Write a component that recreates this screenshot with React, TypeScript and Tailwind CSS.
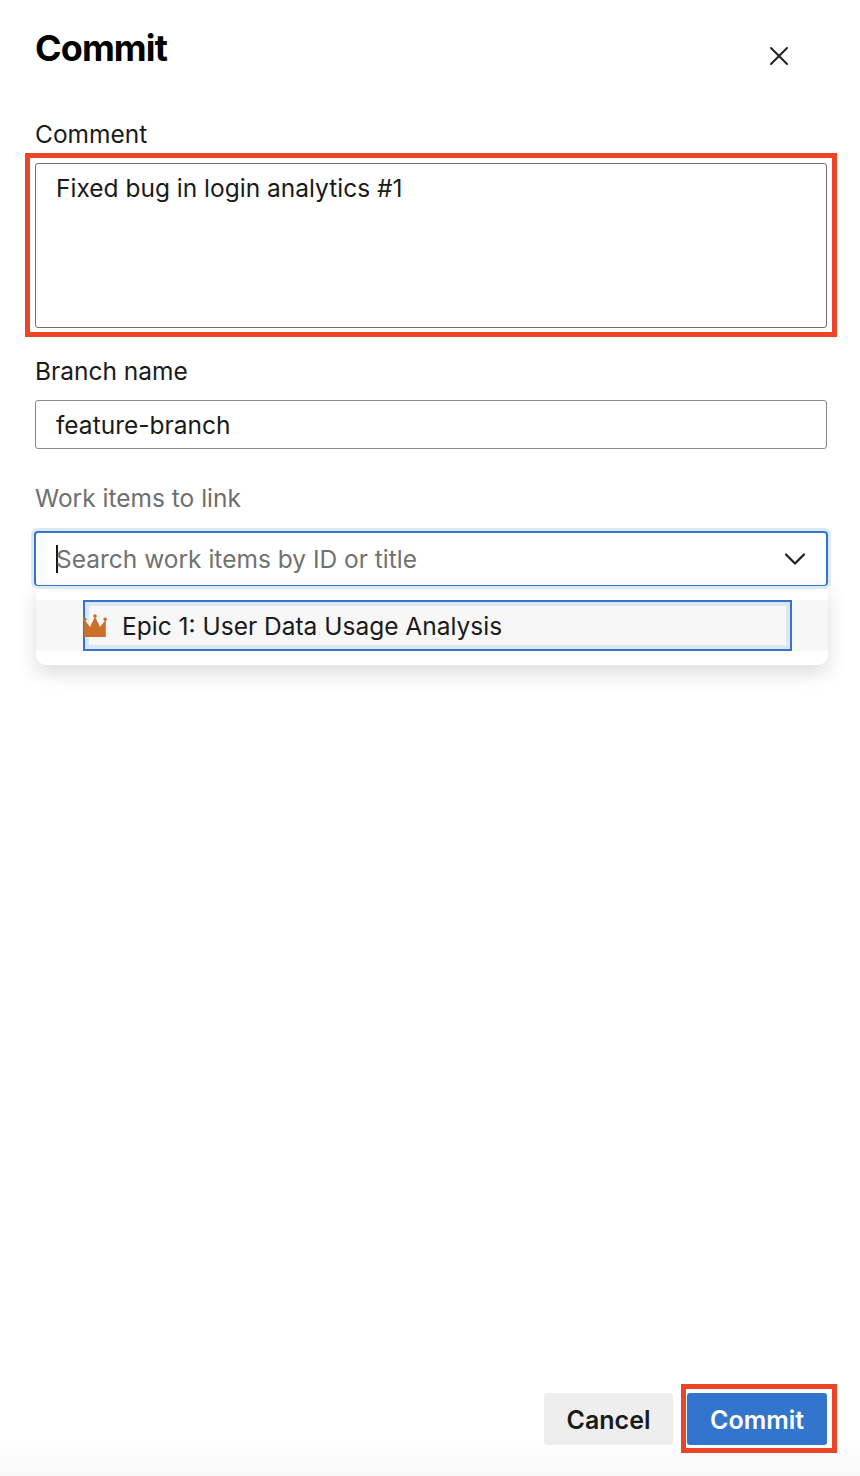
import { X, ChevronDown } from "lucide-react";

const FONT = "font-['Inter','Liberation_Sans',sans-serif]";

function CrownIcon() {
  return (
    <svg width="24" height="24" viewBox="0 0 24 24" className="shrink-0">
      <circle cx="1.8" cy="5.2" r="1.8" fill="#cc7029" />
      <circle cx="12" cy="2" r="1.8" fill="#cc7029" />
      <circle cx="22.2" cy="5.2" r="1.8" fill="#cc7029" />
      <path d="M1.2 5.5 L7 13 L12 2.5 L17 13 L22.8 5.5 L22.8 23 L1.2 23 Z" fill="#cc7029" />
    </svg>
  );
}

export default function App() {
  return (
    <div
      className={`${FONT} flex h-[1476px] w-[860px] flex-col bg-gradient-to-b from-white from-[97.5%] to-[#f8f8f8] pr-[33px] pl-[35px] text-[24.5px] text-[#1a1a1a]`}
    >
      <div className="flex items-start justify-between pt-[25px]">
        <h1 className="text-[36px] leading-[46px] font-bold tracking-[-0.9px] text-black">Commit</h1>
        <button className="mt-[15px] mr-[32px] text-[#222]">
          <X className="h-[32px] w-[32px]" strokeWidth={1.5} />
        </button>
      </div>

      <label className="mt-[47px] leading-[30px]">Comment</label>
      <div className="-mx-[10px] mt-[4px] border-[5px] border-[#ee4426] px-[5px] pt-[5px] pb-[4px]">
        <div className="h-[165px] rounded-[3px] border border-[#6f6f6f] px-[20px] py-[8px] leading-[32px]">
          Fixed bug in login analytics #1
        </div>
      </div>

      <label className="mt-[19px] leading-[30px]">Branch name</label>
      <div className="mt-[14px] h-[49px] rounded-[3px] border border-[#8a8a8a] px-[20px] leading-[49px]">
        feature-branch
      </div>

      <label className="mt-[34px] leading-[30px] text-[#6e6e6e]">Work items to link</label>

      <div className="relative mt-[18px] flex flex-col">
        <div className="relative z-10 -mx-px flex h-[55px] items-center justify-between rounded-[4px] border-2 border-b border-[#3374cc] pr-[13px] pl-[20px] ring-[3px] ring-[#dde8f7]">
          <span className="border-l-2 border-[#1a1a1a] leading-[28px] text-[#717171]">
            <span className="-ml-[2px]">Search work items by ID or title</span>
          </span>
          <ChevronDown className="h-[36px] w-[36px] text-[#222]" strokeWidth={1.5} />
        </div>
        <div className="-mr-px ml-px flex h-[79px] flex-col rounded-b-[10px] bg-white pt-[14px] shadow-[0_8px_20px_rgba(0,0,0,0.14)]">
          <div className="h-[51px] bg-[#f7f7f7] pl-[47px]">
            <div className="flex h-full w-[709px] items-center gap-[15px] border-2 border-[#3374cc] ring-[4px] ring-[#dfe6f3] ring-inset">
              <span className="-ml-[2px] flex">
                <CrownIcon />
              </span>
              <span className="mt-[1px]">Epic 1: User Data Usage Analysis</span>
            </div>
          </div>
        </div>
      </div>

      <div className="mt-auto mb-[23px] flex items-end justify-end gap-[8px]">
        <button className="mb-[8px] h-[52px] w-[129px] rounded-[3px] bg-[#eeeeee] pt-[3px] text-[25px] font-semibold">
          Cancel
        </button>
        <div className="-mr-[10px] border-[5px] border-[#ee4426] pt-[4px] pr-[5px] pb-[3px] pl-[1px]">
          <button className="block h-[52px] w-[140px] rounded-[3px] bg-[#3374cc] pt-[3px] text-[25px] font-semibold text-white">
            Commit
          </button>
        </div>
      </div>
    </div>
  );
}
